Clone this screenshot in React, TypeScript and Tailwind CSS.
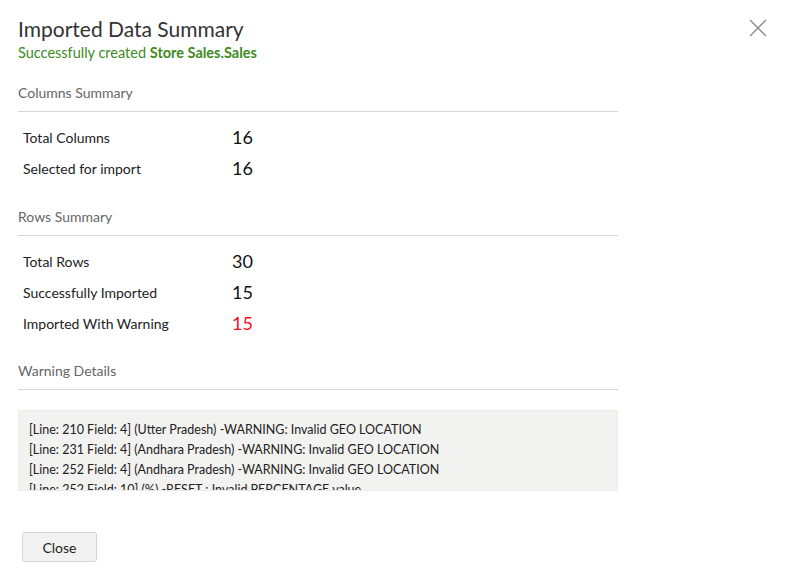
import React from "react";

type Row = { label: string; value: string; warn?: boolean };

const Section: React.FC<{ title: string; rows: Row[]; first?: boolean }> = ({
  title,
  rows,
  first,
}) => {
  return (
    <div className={first ? "mt-[22px]" : "mt-[24px]"}>
      <div className="border-b border-[#d6d6d6] pb-[9px] text-[14px] leading-[18px] text-[#666]">
        {title}
      </div>
      <div className="pt-[10px]">
        {rows.map((r) => (
          <div key={r.label} className="flex h-[31px] items-center pl-[5px]">
            <span className="w-[209px] text-[14px] text-[#222]">{r.label}</span>
            <span
              className={`text-[18px] ${r.warn ? "text-[#f5101a]" : "text-[#111]"}`}
            >
              {r.value}
            </span>
          </div>
        ))}
      </div>
    </div>
  );
};

const warnings = [
  "[Line: 210 Field: 4] (Utter Pradesh) -WARNING: Invalid GEO LOCATION",
  "[Line: 231 Field: 4] (Andhara Pradesh) -WARNING: Invalid GEO LOCATION",
  "[Line: 252 Field: 4] (Andhara Pradesh) -WARNING: Invalid GEO LOCATION",
  "[Line: 252 Field: 10] (%) -RESET : Invalid PERCENTAGE value",
];

export default function App() {
  return (
    <div
      className="relative h-[570px] w-[785px] bg-white"
      style={{ fontFamily: "Lato, 'Open Sans', sans-serif" }}
    >
      <button className="absolute right-[18px] top-[19px] text-[#888]">
        <svg width="18" height="18" viewBox="0 0 18 18">
          <path d="M1 1 L17 17 M17 1 L1 17" stroke="currentColor" strokeWidth="1.4" />
        </svg>
      </button>

      <div className="pl-[18px] pt-[16px]">
        <h1 className="text-[21px] leading-[26px] text-[#333]">Imported Data Summary</h1>
        <p className="mt-[2px] text-[14.5px] leading-[18px] text-[#3e8a1e]">
          Successfully created <span className="font-bold">Store Sales.Sales</span>
        </p>

        <div className="w-[600px]">
          <Section
            first
            title="Columns Summary"
            rows={[
              { label: "Total Columns", value: "16" },
              { label: "Selected for import", value: "16" },
            ]}
          />
          <Section
            title="Rows Summary"
            rows={[
              { label: "Total Rows", value: "30" },
              { label: "Successfully Imported", value: "15" },
              { label: "Imported With Warning", value: "15", warn: true },
            ]}
          />

          <div className="mt-[23px]">
            <div className="border-b border-[#d6d6d6] pb-[9px] text-[14px] leading-[18px] text-[#666]">
              Warning Details
            </div>
            <div className="mt-[20px] h-[81px] overflow-hidden border border-[#ececec] bg-[#f2f2f1] px-[10px] pt-[9px]">
              {warnings.map((w) => (
                <div key={w} className="text-[12.5px] leading-[20px] text-[#222]">
                  {w}
                </div>
              ))}
            </div>
          </div>
        </div>

        <button className="ml-[4px] mt-[41px] h-[30px] w-[75px] rounded-[3px] border border-[#d4d4d4] bg-[#f2f2f2] text-[14px] text-[#222]">
          Close
        </button>
      </div>
    </div>
  );
}
